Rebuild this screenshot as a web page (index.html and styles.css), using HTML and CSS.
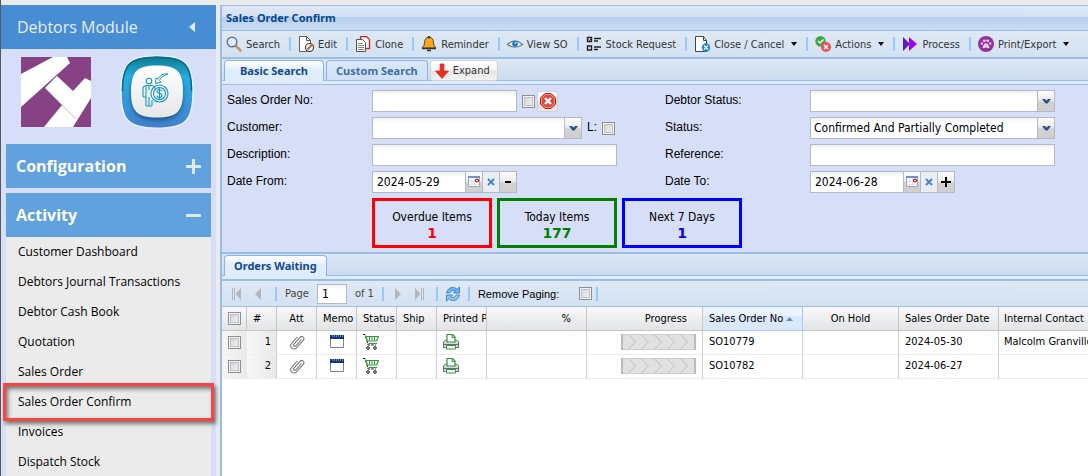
FILE: index.html
```html
<!DOCTYPE html>
<html lang="en">
  <head>
    <meta charset="utf-8" />
    <title>Sales Order Confirm</title>
    <link rel="stylesheet" href="styles.css">
  </head>
  <body>
    <!-- shapes used more than once -->
    <svg class="defs" width="0" height="0" aria-hidden="true">
      <symbol id="chevron" viewBox="0 0 9 5">
        <path d="M0 0h3l1.500 1.500L6 0h3L5.500 4.500h-2z" fill="#2c4f8c" />
      </symbol>
      <symbol id="calendar" viewBox="0 0 14 14">
        <path d="M1.500 2.500h11v9h-11z" fill="#fff" stroke="#8fa9cf" />
        <path d="M1 1h12v2H1z" fill="#6b93c7" />
        <path d="M4.500 4v7M7.500 4v7M2 6.500h10M2 9.500h10" stroke="#e6e1dc" />
        <circle cx="10" cy="5.500" r="1.500" fill="#fff" stroke="#a11212" stroke-width="1.200" />
      </symbol>
      <symbol id="clip" viewBox="0 0 16 16">
        <path d="M12.500 5.500L6.800 11.800a1.200 1.200 0 0 1-1.900-1.600L11 3.300a2.200 2.200 0 0 1 3.300 3L7.500 13.800a3.300 3.300 0 0 1-5-4.300L8.300 3" fill="none" stroke="#777" stroke-width="1.100" />
      </symbol>
      <symbol id="memo" viewBox="0 0 16 16">
        <path d="M1.500 3.500h13v10h-13z" fill="#fff" stroke="#77828f" />
        <path d="M1 1h14v4H1z" fill="#12357c" />
        <path d="M3.500 1v2M5.500 1v2M7.500 1v2M9.500 1v2M11.500 1v2M13.500 1v2" stroke="#8fa8d8" stroke-width=".7" />
      </symbol>
      <symbol id="cart" viewBox="0 0 16 16">
        <path d="M0 .5h2l3 10.500h8" fill="none" stroke="#222" stroke-dasharray="3 1" />
        <path d="M3 2.500h12.500l-2 4.500H4.500z" fill="#fff" stroke="#2f9a3c" stroke-width="1.200" />
        <path d="M6.500 3v3.500M9 3v3.500M11.500 3v3.500M5.500 9.500h8.500" stroke="#2f9a3c" />
        <circle cx="5" cy="14" r="1.300" fill="#fff" stroke="#111" />
        <circle cx="12" cy="14" r="1.300" fill="#fff" stroke="#111" />
      </symbol>
      <symbol id="printer" viewBox="0 0 16 16">
        <path d="M2.500 6h11l2 2v5.500H.5V8z" fill="#d5d8da" stroke="#666b6e" />
        <path d="M1 10.500h14" stroke="#666b6e" />
        <path d="M4 8V.5h5.500l2.500 2.500v5z" fill="#fff" stroke="#2f9a3c" stroke-width="1.200" />
        <path d="M9 1v2.500h3" fill="none" stroke="#2f9a3c" />
        <path d="M3.500 11.500h9v3.500h-9z" fill="#fff" stroke="#2f9a3c" />
      </symbol>
      <symbol id="steps" viewBox="0 0 75 16">
        <path d="M.5.5h74v15H.5z" fill="#e1e1e1" stroke="#d3cccc" />
        <path d="M1 0v16M74 0v16" stroke="#c0b7b7" stroke-width="2" />
        <path d="M7.500 1l7 7-7 7M20.500 1l7 7-7 7M33.500 1l7 7-7 7M46.500 1l7 7-7 7M59.500 1l7 7-7 7" fill="none" stroke="#bdbdbd" />
      </symbol>
    </svg>

    <div class="app">
      <aside class="sidebar">
        <div class="sidebar-head">
          <span>Debtors Module</span>
          <svg width="7" height="10" viewBox="0 0 7 10"><path d="M6 0v10L0 5z" fill="#e2ecf8" /></svg>
        </div>
        <div class="logos">
          <svg width="70" height="70" viewBox="0 0 70 70">
            <path d="M0 0h70v70H0z" fill="#864285" />
            <path d="M0 17L32 0h14l3 6L0 50z" fill="#fff" />
            <path d="M36 19l16 15 12-13 6 3v17L52 70H23l18-22-17-17z" fill="#fff" />
            <path d="M25 30l11-11M41 48l14 14" stroke="#c9c2cc" />
          </svg>
          <svg width="74" height="74" viewBox="0 0 74 74">
            <defs>
              <linearGradient id="ring" x1="0" y1="0" x2="0" y2="1">
                <stop offset="0" stop-color="#0d7891" />
                <stop offset=".3" stop-color="#27aee2" />
                <stop offset="1" stop-color="#4380cb" />
              </linearGradient>
              <linearGradient id="face" x1="0" y1="0" x2="0" y2="1">
                <stop offset="0" stop-color="#fff" />
                <stop offset="1" stop-color="#e6e7e9" />
              </linearGradient>
              <filter id="soft" x="-20%" y="-20%" width="140%" height="140%"><feGaussianBlur stdDeviation="2" /></filter>
            </defs>
            <path d="M37 .8c29 0 36 8 36 36.200s-7 36.200-36 36.200S1 65 1 37 8 .8 37 .8z" fill="url(#ring)" stroke="#e9f1fb" stroke-width="1.500" />
            <path d="M37 2.300c28 0 34.500 7.500 34.500 34M37 2.300c-28 0-34.500 7.500-34.500 34" fill="none" stroke="#0b6c7e" stroke-width="1.500" />
            <path d="M37 14c20 0 26 6 26 25s-6 26-26 26-26-7-26-26 6-25 26-25z" fill="#164579" opacity=".8" filter="url(#soft)" />
            <path d="M37 10.500c20 0 26 6 26 26s-6 26-26 26-26-6-26-26 6-26 26-26z" fill="url(#face)" />
            <g fill="none" stroke="#1597c4" stroke-width="1.100">
              <circle cx="29" cy="26" r="2.800" />
              <path d="M26 51V31M32 51v-6M29 42v9M26 51h6M23 42V34q0-3.500 4-3.500h4q4 0 4 3M23 42h3M29 31v4" />
              <circle cx="39.500" cy="38.500" r="8.500" />
              <circle cx="39.500" cy="38.500" r="6" />
              <path d="M42 36q-1-1.500-3-1.300-2.300.3-2 2 .3 1.300 2.500 1.700 2.500.5 2.500 2.200-.3 1.800-2.500 1.800-2 0-2.800-1.600M39.500 33v11" />
              <path d="M48 19q-7-1-10 5l-2-1-.5 5.500 5.500-1.500-1.500-1.500q2-5 8.500-6.500z" stroke-width="1" />
            </g>
          </svg>
        </div>
        <button class="section" type="button">
          Configuration
          <svg width="15" height="15" viewBox="0 0 15 15"><path d="M7.500 1v13M1 7.500h13" stroke="#dce9f6" stroke-width="3" stroke-linecap="round" /></svg>
        </button>
        <button class="section" type="button">
          Activity
          <svg width="15" height="15" viewBox="0 0 15 15"><path d="M1 7.500h13" stroke="#dce9f6" stroke-width="3" stroke-linecap="round" /></svg>
        </button>
        <ul class="menu">
          <li><a href="#">Customer Dashboard</a></li>
          <li><a href="#">Debtors Journal Transactions</a></li>
          <li><a href="#">Debtor Cash Book</a></li>
          <li><a href="#">Quotation</a></li>
          <li><a href="#">Sales Order</a></li>
          <li class="marked"><a href="#">Sales Order Confirm</a></li>
          <li><a href="#">Invoices</a></li>
          <li><a href="#">Dispatch Stock</a></li>
        </ul>
      </aside>

      <main class="panel">
        <h1 class="title">Sales Order Confirm</h1>

        <div class="toolbar">
          <button type="button">
            <svg width="16" height="16" viewBox="0 0 16 16"><path d="M9.500 9.500l5 5" stroke="#c99a5b" stroke-width="2.600" stroke-linecap="round" /><circle cx="6" cy="6" r="4.800" fill="#e4eefa" stroke="#58719c" stroke-width="1.400" /></svg>
            Search
          </button>
          <button type="button">
            <svg width="16" height="16" viewBox="0 0 16 16"><path d="M1.500.5h7l4 4v11h-11z" fill="#fff" stroke="#555" stroke-width=".9" /><path d="M8.500.5v4h4" fill="none" stroke="#555" /><circle cx="11.500" cy="11.500" r="4" fill="#fff" stroke="#444" stroke-width="1.200" /><path d="M9.500 13.500l4.500-5" stroke="#c46a35" stroke-width="2" /></svg>
            Edit
          </button>
          <button type="button">
            <svg width="16" height="16" viewBox="0 0 16 16"><path d="M5.500.5h6l3 3v9h-9z" fill="#fff" stroke="#d8222a" stroke-width="1.300" /><path d="M1.500 3.500h6l3 3v9h-9z" fill="#fff" stroke="#555" /><path d="M3 7.500h5M3 9.500h6M3 11.500h6M3 13.500h6" stroke="#888" /></svg>
            Clone
          </button>
          <button type="button">
            <svg width="16" height="16" viewBox="0 0 16 16"><path d="M8 1q4.500.5 4.500 6 0 3 2.500 5H1q2.500-2 2.500-5Q3.500 1.500 8 1z" fill="#f9a91c" stroke="#4b3a23" stroke-width=".9" /><path d="M1 12.500h14M6 14.500h4" stroke="#333" stroke-width="1.600" /><circle cx="8" cy="1.300" r="1.200" fill="#333" /></svg>
            Reminder
          </button>
          <button type="button">
            <svg width="16" height="16" viewBox="0 0 16 16"><path d="M.5 8.500Q8 1.500 15.500 8.500 8 14 .5 8.500z" fill="#fff" stroke="#5d8097" stroke-width="1.200" /><circle cx="8" cy="8" r="2.800" fill="#1d72c2" /><circle cx="8.500" cy="7" r="1" fill="#bfe0ff" /></svg>
            View SO
          </button>
          <button type="button">
            <svg width="16" height="16" viewBox="0 0 16 16"><path d="M1.500 1.500h4v4h-4zM1.500 10h4v4h-4zM8 2.500h7M8 5h4M8 11h7M8 13.500h4" fill="none" stroke="#222" stroke-width="1.400" /><path d="M2.500 3.500l1 1 2-2" fill="none" stroke="#222" /></svg>
            Stock Request
          </button>
          <button type="button">
            <svg width="16" height="16" viewBox="0 0 16 16"><path d="M1.500.5h8l3 4v11h-11z" fill="#fff" stroke="#444" /><path d="M9.500.5v4h3" fill="none" stroke="#444" /><circle cx="12" cy="11.500" r="4.200" fill="#1f86db" /><path d="M10 9.500l4 4M14 9.500l-4 4" stroke="#fff" stroke-width="1.200" /></svg>
            Close / Cancel <i class="caret"></i>
          </button>
          <button type="button">
            <svg width="16" height="16" viewBox="0 0 16 16"><circle cx="5.500" cy="5.200" r="5.200" fill="#3aa745" /><path d="M3 5l2 2 3.500-3.500" fill="none" stroke="#fff" stroke-width="1.500" /><circle cx="11" cy="11" r="5" fill="#f04e57" /><path d="M9 9l4 4M13 9l-4 4" stroke="#fff" stroke-width="1.500" /></svg>
            Actions <i class="caret"></i>
          </button>
          <button type="button">
            <svg width="16" height="16" viewBox="0 0 16 16"><path d="M1 1l7 7-7 7z" fill="#5a1fb4" /><path d="M7 1l8 7-8 7z" fill="#a200f5" /></svg>
            Process
          </button>
          <button type="button">
            <svg width="16" height="16" viewBox="0 0 16 16"><circle cx="8" cy="8" r="8" fill="#93329b" /><circle cx="6.300" cy="4.800" r="1.400" fill="#e9cdea" /><circle cx="9.700" cy="4.800" r="1.400" fill="#e9cdea" /><circle cx="3.800" cy="7.500" r="1.200" fill="#e9cdea" /><circle cx="12.200" cy="7.500" r="1.200" fill="#e9cdea" /><path d="M8 7q3 1 3.500 5-2 .5-3.500-.8Q6.500 12.500 4.500 12 5 8 8 7z" fill="#e9cdea" /></svg>
            Print/Export <i class="caret"></i>
          </button>
        </div>

        <div class="tabs">
          <button class="tab active" type="button">Basic Search</button>
          <button class="tab" type="button">Custom Search</button>
          <button class="expand" type="button">
            <svg width="14" height="16" viewBox="0 0 14 16"><path d="M5 1h4v7h4.500L7 15.500.5 8H5z" fill="#ee2b24" stroke="#c2332b" stroke-width=".7" /></svg>
            Expand
          </button>
        </div>

        <form class="search">
          <div class="fields">
            <label for="order-no">Sales Order No:</label>
            <div class="field">
              <input class="text" id="order-no" type="text" />
              <input type="checkbox" aria-label="Exact number" />
              <button class="clear" type="button" aria-label="Clear">
                <svg width="16" height="16" viewBox="0 0 16 16"><path d="M5 .5h6L15.500 5v6L11 15.500H5L.5 11V5z" fill="#e2463a" stroke="#a92a22" /><path d="M5.500 1.500h5l4 4v5l-4 4h-5l-4-4v-5z" fill="none" stroke="#f4998c" /><path d="M5 5l6 6M11 5l-6 6" stroke="#fff" stroke-width="2.400" /></svg>
              </button>
            </div>
            <label for="debtor-status">Debtor Status:</label>
            <div class="field">
              <span class="combo wide">
                <select id="debtor-status"><option></option></select>
                <span class="trigger"><svg width="9" height="5"><use href="#chevron" /></svg></span>
              </span>
            </div>

            <label for="customer">Customer:</label>
            <div class="field">
              <span class="combo">
                <select id="customer"><option></option></select>
                <span class="trigger"><svg width="9" height="5"><use href="#chevron" /></svg></span>
              </span>
              <label for="lock">L:</label>
              <input id="lock" type="checkbox" />
            </div>
            <label for="status">Status:</label>
            <div class="field">
              <span class="combo wide">
                <select id="status"><option>Confirmed And Partially Completed</option></select>
                <span class="trigger"><svg width="9" height="5"><use href="#chevron" /></svg></span>
              </span>
            </div>

            <label for="description">Description:</label>
            <div class="field"><input class="text wide" id="description" type="text" /></div>
            <label for="reference">Reference:</label>
            <div class="field"><input class="text wide" id="reference" type="text" /></div>

            <label for="date-from">Date From:</label>
            <div class="field date">
              <input class="text" id="date-from" type="text" value="2024-05-29" />
              <button type="button" aria-label="Pick date"><svg width="14" height="14"><use href="#calendar" /></svg></button>
              <button class="reset" type="button" aria-label="Reset date"><svg width="8" height="8" viewBox="0 0 8 8"><path d="M1 1l6 6M7 1L1 7" stroke="#4583c4" stroke-width="1.800" /></svg></button>
              <button type="button" aria-label="Less"><svg width="10" height="10" viewBox="0 0 10 10"><path d="M2 5h6" stroke="#000" stroke-width="2" /></svg></button>
            </div>
            <label for="date-to">Date To:</label>
            <div class="field date">
              <input class="text" id="date-to" type="text" value="2024-06-28" />
              <button type="button" aria-label="Pick date"><svg width="14" height="14"><use href="#calendar" /></svg></button>
              <button class="reset" type="button" aria-label="Reset date"><svg width="8" height="8" viewBox="0 0 8 8"><path d="M1 1l6 6M7 1L1 7" stroke="#4583c4" stroke-width="1.800" /></svg></button>
              <button type="button" aria-label="More"><svg width="10" height="10" viewBox="0 0 10 10"><path d="M0 5h10M5 0v10" stroke="#000" stroke-width="2" /></svg></button>
            </div>
          </div>
          <div class="counters">
            <div class="counter overdue">Overdue Items<b>1</b></div>
            <div class="counter today">Today Items<b>177</b></div>
            <div class="counter next">Next 7 Days<b>1</b></div>
          </div>
        </form>

        <div class="tabs">
          <button class="tab active" type="button">Orders Waiting</button>
        </div>

        <div class="paging">
          <button type="button" aria-label="First page"><svg width="11" height="12" viewBox="0 0 11 12"><path d="M1.500 0v12M3.500 0v12" stroke="#b3b7bc" /><path d="M10 0v12L4.500 6z" fill="#b3b7bc" /></svg></button>
          <button type="button" aria-label="Previous page"><svg width="11" height="12" viewBox="0 0 11 12"><path d="M8 0v12L2 6z" fill="#b3b7bc" /></svg></button>
          <i class="sep"></i>
          <label for="page">Page</label>
          <input class="text" id="page" type="text" value="1" />
          <span>of 1</span>
          <i class="sep"></i>
          <button type="button" aria-label="Next page"><svg width="11" height="12" viewBox="0 0 11 12"><path d="M3 0v12l6-6z" fill="#b3b7bc" /></svg></button>
          <button type="button" aria-label="Last page"><svg width="11" height="12" viewBox="0 0 11 12"><path d="M1 0v12l5.500-6z" fill="#b3b7bc" /><path d="M7.500 0v12M9.500 0v12" stroke="#b3b7bc" /></svg></button>
          <i class="sep"></i>
          <button class="refresh" type="button" aria-label="Refresh"><svg width="16" height="16" viewBox="0 0 16 16"><path d="M1.500 7Q3 1 8.500 1.500q2.200.2 3.500 1.800L14.500 1v6H8.500l2-2.200Q7 3 4.500 7z" fill="#6db4f0" stroke="#2a76c2" stroke-width=".8" /><path d="M14.500 9Q13 15 7.500 14.500q-2.200-.2-3.500-1.800L1.500 15V9h6l-2 2.200Q9 13 11.500 9z" fill="#8cc6f5" stroke="#2a76c2" stroke-width=".8" /></svg></button>
          <i class="sep"></i>
          <label class="remove" for="remove-paging">Remove Paging:</label>
          <input id="remove-paging" type="checkbox" />
          <i class="sep end"></i>
        </div>

        <table class="grid">
          <colgroup>
            <col class="w25" /><col class="w30" /><col class="w40" /><col class="w40" /><col class="w40" /><col class="w40" /><col class="w50" /><col class="w100" /><col class="w116" /><col class="w100" /><col class="w96" /><col class="w100" /><col />
          </colgroup>
          <thead>
            <tr>
              <th class="check"><input type="checkbox" aria-label="Select all" /></th>
              <th>#</th>
              <th class="mid">Att</th>
              <th>Memo</th>
              <th>Status</th>
              <th>Ship</th>
              <th>Printed PDF</th>
              <th class="num">%</th>
              <th class="num">Progress</th>
              <th class="sorted">Sales Order No <svg width="7" height="4" viewBox="0 0 7 4"><path d="M0 4l3.500-4L7 4z" fill="#5b8fd0" /></svg></th>
              <th class="mid">On Hold</th>
              <th>Sales Order Date</th>
              <th>Internal Contact</th>
            </tr>
          </thead>
          <tbody>
            <tr>
              <td class="check"><input type="checkbox" aria-label="Select SO10779" /></td>
              <td class="row-no">1</td>
              <td class="mid"><svg width="16" height="16"><use href="#clip" /></svg></td>
              <td class="mid"><svg width="16" height="16"><use href="#memo" /></svg></td>
              <td><svg width="16" height="16"><use href="#cart" /></svg></td>
              <td></td>
              <td><svg width="16" height="16"><use href="#printer" /></svg></td>
              <td></td>
              <td class="progress"><svg width="75" height="16"><use href="#steps" /></svg></td>
              <td>SO10779</td>
              <td></td>
              <td>2024-05-30</td>
              <td>Malcolm Granville</td>
            </tr>
            <tr>
              <td class="check"><input type="checkbox" aria-label="Select SO10782" /></td>
              <td class="row-no">2</td>
              <td class="mid"><svg width="16" height="16"><use href="#clip" /></svg></td>
              <td class="mid"><svg width="16" height="16"><use href="#memo" /></svg></td>
              <td><svg width="16" height="16"><use href="#cart" /></svg></td>
              <td></td>
              <td><svg width="16" height="16"><use href="#printer" /></svg></td>
              <td></td>
              <td class="progress"><svg width="75" height="16"><use href="#steps" /></svg></td>
              <td>SO10782</td>
              <td></td>
              <td>2024-06-27</td>
              <td></td>
            </tr>
          </tbody>
        </table>
      </main>
    </div>
  </body>
</html>
```
FILE: styles.css
```css
* {
  box-sizing: border-box;
}

body {
  margin: 0;
  background: #ebebeb;
  color: #000;
  font-family: "DejaVu Sans Condensed", "DejaVu Sans", sans-serif;
  font-size: 11px;
}

button,
input,
select {
  font: inherit;
  color: inherit;
  margin: 0;
}

button {
  padding: 0;
  border: 0;
  background: none;
}

svg {
  display: block;
  flex: none;
}

.defs {
  position: absolute;
}

.app {
  display: flex;
  gap: 4px;
  height: 100vh;
  padding-top: 5px;
  border-left: 1px solid #55575c;
  overflow: hidden;
}

/* sidebar */

.sidebar {
  flex: none;
  width: 215px;
  background: #d6def8;
  font-family: "Open Sans", "Noto Sans", sans-serif;
}

.sidebar-head {
  display: flex;
  justify-content: space-between;
  align-items: center;
  height: 44px;
  padding: 0 20px 0 16px;
  background: #468dd4;
  color: #e6eefa;
  font-size: 16px;
}

.logos {
  display: flex;
  align-items: center;
  gap: 29px;
  height: 90px;
  padding: 0 20px 4px;
}

.section {
  display: flex;
  justify-content: space-between;
  align-items: center;
  width: 205px;
  height: 44px;
  margin: 5px 5px 0;
  padding: 0 10px;
  background: #60a1de;
  color: #fff;
  font-size: 16px;
  font-weight: bold;
}

.menu {
  height: 100%;
  margin: 0 5px;
  padding: 0;
  background: #ebebeb;
  list-style: none;
}

.menu li {
  position: relative;
}

.menu a {
  display: block;
  padding-left: 12px;
  color: #000;
  font-size: 12px;
  line-height: 30px;
  text-decoration: none;
}

.marked::after {
  content: "";
  position: absolute;
  inset: -4px -3px -4px -3px;
  border: 3px solid #fc4343;
  box-shadow: 2px 3px 4px rgba(0, 0, 0, 0.5), inset 2px 3px 4px rgba(0, 0, 0, 0.5);
}

/* main panel */

.panel {
  flex: 1;
  min-width: 0;
  border-top: 1px solid #99bce8;
  border-left: 2px solid #99bce8;
  background: #fff;
}

.title {
  height: 25px;
  margin: 0;
  padding-left: 4px;
  border-bottom: 1px solid #99bce8;
  background: linear-gradient(#dfe8f7, #d3e0f4 45%, #b6ceed 48%, #cbddf3);
  color: #04468c;
  font-family: "Noto Sans", sans-serif;
  font-size: 11px;
  line-height: 24px;
}

.toolbar {
  display: flex;
  align-items: center;
  height: 28px;
  padding-left: 4px;
  border-bottom: 2px solid #99bce8;
  background: linear-gradient(#dfe9f5, #d3e1f1);
  color: #333;
}

.toolbar button {
  display: flex;
  align-items: center;
  gap: 4px;
  flex: none;
  height: 14px;
  margin-right: 7px;
  padding-right: 9px;
  border-right: 2px solid #98c8ff;
  white-space: nowrap;
}

.toolbar button:last-child {
  border: 0;
}

.caret {
  margin-left: 3px;
  border: 3px solid transparent;
  border-top: 4px solid #000;
  border-bottom: 0;
}

.tabs {
  display: flex;
  gap: 2px;
  height: 26px;
  padding: 1px 2px 0;
  border-bottom: 1px solid #99bce8;
  background: linear-gradient(#dde8f5, #cbdbef 21px, #99bce8 21px, #99bce8 22px, #deecfd 22px);
}

.tab {
  min-width: 100px;
  height: 20px;
  padding: 0 9px 1px;
  border: 1px solid #8db3e3;
  border-bottom: 0;
  border-radius: 4px 4px 0 0;
  background: linear-gradient(#dbe8f8, #cfe0f5);
  color: #416da3;
  font-family: "Noto Sans", sans-serif;
  font-weight: bold;
}

.tab.active {
  height: 21px;
  background: linear-gradient(#fff, #deecfd 50%);
  color: #15498b;
}

.expand {
  display: flex;
  align-items: center;
  gap: 4px;
  height: 21px;
  padding: 0 7px 0 4px;
  border: 1px solid #d4d4d4;
  border-radius: 3px;
  background: linear-gradient(#fff, #f7f7f7 48%, #e4e4e4 52%, #f2f2f2);
  color: #333;
}

/* search form */

.search {
  padding: 5px 5px 4px;
  border-bottom: 2px solid #99bce8;
  background: #d6def8;
}

.fields {
  display: grid;
  grid-template-columns: 145px 293px 145px auto;
  grid-auto-rows: 22px;
  row-gap: 5px;
  align-items: center;
  font-size: 12px;
}

.fields label {
  padding-bottom: 2px;
  font-family: "Liberation Sans", Arial, sans-serif;
  line-height: 18px;
}

.field {
  display: flex;
  align-items: center;
  gap: 5px;
}

.text,
select {
  width: 145px;
  height: 22px;
  padding: 0 4px;
  border: 1px solid #b5b8c8;
  border-radius: 0;
  background: linear-gradient(#eef2f2, #fff 5px);
}

.wide {
  width: 245px;
}

.combo {
  position: relative;
  width: 210px;
}

.combo.wide {
  width: 245px;
}

select {
  display: block;
  width: 100%;
  padding: 0 20px 0 3px;
  appearance: none;
}

.trigger {
  position: absolute;
  top: 1px;
  right: 1px;
  bottom: 1px;
  display: flex;
  justify-content: center;
  align-items: center;
  width: 17px;
  border-left: 1px solid #b5b8c8;
  background: linear-gradient(#fdfdfd, #ececec 45%, #d2d2d2 55%, #cfcfcf);
  pointer-events: none;
}

input[type="checkbox"] {
  flex: none;
  width: 13px;
  height: 13px;
  border: 1px solid #8e8f8f;
  background: linear-gradient(135deg, #cbcfd5, #f6f6f6);
  box-shadow: inset 0 0 0 1px #f4f4f4, inset 0 0 0 2px #bcc0c5;
  appearance: none;
}

.clear {
  display: flex;
  justify-content: center;
  align-items: center;
  width: 21px;
  height: 21px;
  margin-left: -3px;
  border: 1px solid #d1d1d1;
  border-radius: 3px;
  background: linear-gradient(#fff, #f2f2f2 48%, #dedede 52%, #e8e8e8);
}

.date {
  gap: 0;
}

.date .text {
  width: 94px;
}

.date button {
  display: flex;
  justify-content: center;
  align-items: center;
  width: 17px;
  height: 22px;
  border: solid #b5b8c8;
  border-width: 1px 1px 1px 0;
  background: linear-gradient(#fdfdfd, #ececec 45%, #d2d2d2 55%, #cfcfcf);
}

.date .reset {
  background: #e9edf4;
}

.counters {
  display: flex;
  gap: 5px;
  margin: 5px 0 0 145px;
}

.counter {
  width: 120px;
  height: 50px;
  padding-top: 8px;
  border: 3px solid;
  font-size: 12px;
  line-height: 16px;
  text-align: center;
}

.counter b {
  display: block;
  font-family: "DejaVu Sans", sans-serif;
  font-size: 14px;
}

.overdue {
  border-color: #f00;
}

.overdue b {
  color: #f00;
}

.today {
  border-color: #008000;
}

.today b {
  color: #008000;
}

.next {
  border-color: #00f;
}

.next b {
  color: #00f;
}

/* grid */

.paging {
  display: flex;
  align-items: center;
  gap: 8px;
  height: 27px;
  padding-left: 9px;
  border-top: 1px solid #99bce8;
  border-bottom: 1px solid #99bce8;
  background: linear-gradient(#dfe9f5, #d3e1f1);
  color: #444;
}

.paging button {
  margin-right: 3px;
}

.paging .refresh {
  margin: 0 -1px;
}

.sep {
  width: 2px;
  height: 14px;
  background: #98c8ff;
}

.sep.end {
  margin-left: -4px;
}

#page {
  width: 30px;
  height: 20px;
  color: #000;
  font-size: 12px;
}

.remove {
  margin-right: 12px;
  color: #000;
  font-family: "Liberation Sans", Arial, sans-serif;
}

.grid {
  width: 100%;
  border-spacing: 0;
  table-layout: fixed;
}

.w25 {
  width: 25px;
}

.w30 {
  width: 30px;
}

.w40 {
  width: 40px;
}

.w50 {
  width: 50px;
}

.w96 {
  width: 96px;
}

.w100 {
  width: 100px;
}

.w116 {
  width: 116px;
}

.grid th,
.grid td {
  height: 24px;
  padding: 0 0 2px 6px;
  border-right: 1px solid #d0d0d0;
  border-bottom: 1px solid #ededed;
  font-weight: normal;
  text-align: left;
  white-space: nowrap;
  overflow: hidden;
}

.grid th {
  padding-bottom: 0;
  border-color: #c5c5c5;
  background: linear-gradient(#f9f9f9, #e3e4e6);
}

.grid th:last-child,
.grid td:last-child {
  padding-left: 5px;
  border-right: 0;
}

.grid .mid {
  padding-left: 0;
  text-align: center;
}

.mid svg {
  margin: 0 auto;
}

.grid .num {
  padding-right: 15px;
  text-align: right;
}

.grid .check {
  padding: 2px 0 0 6px;
}

.grid .sorted {
  border-color: #aaccf6;
  background: linear-gradient(#ebf3fd, #ebf3fd 39%, #d9e8fb 40%);
}

.sorted svg {
  display: inline-block;
  vertical-align: middle;
}

.grid td.check,
.grid .row-no {
  background: linear-gradient(90deg, #f7f7f7, #e9e9e9);
}

.grid td.check {
  border-right: 0;
}

.grid .row-no {
  padding-right: 5px;
  text-align: right;
}

.progress svg {
  margin-left: 28px;
}
```
